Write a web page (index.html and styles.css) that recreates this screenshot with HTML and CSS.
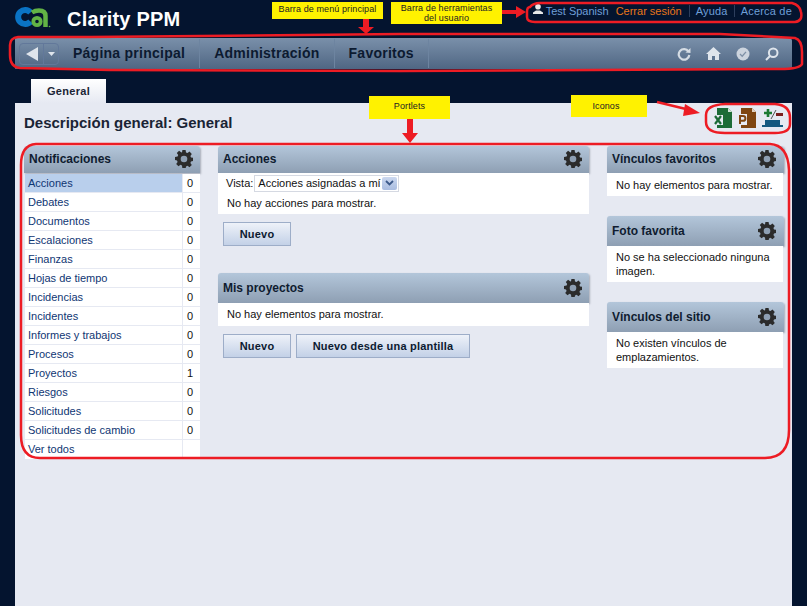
FILE: index.html
```html
<!DOCTYPE html>
<html lang="es">
<head>
    <meta charset="UTF-8">
    <title>Clarity PPM</title>
    <link rel="stylesheet" href="styles.css">
</head>
<body>
    <svg class="defs" width="0" height="0">
        <symbol id="gear" viewBox="0 0 18 18">
            <path d="M7.4 0h3.2l.4 2.4 1.5.6 2-1.4 2.3 2.3-1.4 2 .6 1.5 2.4.4v3.2l-2.4.4-.6 1.5 1.4 2-2.3 2.3-2-1.4-1.5.6-.4 2.4H7.4L7 15.4 5.5 14.8l-2 1.4-2.3-2.3 1.4-2-.6-1.5L0 10V7l2.6-.4.6-1.5-1.4-2 2.3-2.3 2 1.400L7 2.4z" fill="#2b2b2b"/>
            <circle cx="9" cy="9" r="3.3" fill="#8e9fb3"/>
        </symbol>
    </svg>

    <header class="top-bar">
        <div class="brand">
            <svg class="logo" width="36" height="24" viewBox="0 0 36 24">
                <path d="M15.5 6.500A7 7 0 1 0 15.5 15.500" fill="none" stroke="#0a73c4" stroke-width="6"/>
                <path d="M17 6.500Q20 4.500 24 4.500 30.500 4.500 30.500 10V21" fill="none" stroke="#62b345" stroke-width="4.500"/>
                <circle cx="22" cy="15.500" r="3.700" fill="none" stroke="#62b345" stroke-width="3.800"/>
                <circle cx="34.500" cy="20.500" r=".8" fill="#62b345"/>
            </svg>
            <span class="product">Clarity PPM</span>
        </div>
        <div class="user-tools">
            <svg class="user-icon" width="10" height="10" viewBox="0 0 10 10"><circle cx="5" cy="2.800" r="2.800" fill="#e8e8e8"/><path d="M0 10V8.500L3 6.500h4l3 2V10z" fill="#e8e8e8"/></svg>
            <a class="user-name">Test Spanish</a>
            <a class="logout">Cerrar sesión</a>
            <a class="tool-link">Ayuda</a>
            <a class="tool-link">Acerca de</a>
        </div>
    </header>

    <nav class="main-menu">
        <div class="history">
            <span class="history-back"><svg width="12" height="14" viewBox="0 0 12 14"><path d="M12 0v14L0 7z" fill="#dfe5ec"/></svg></span>
            <span class="history-more"><svg width="7" height="4" viewBox="0 0 7 4"><path d="M0 0h7L3.500 4z" fill="#dfe5ec"/></svg></span>
        </div>
        <a class="menu-item">Página principal</a>
        <a class="menu-item">Administración</a>
        <a class="menu-item">Favoritos</a>
        <div class="menu-icons">
            <svg width="14" height="14" viewBox="0 0 14 14"><path d="M11.500 4.500A5.300 5.300 0 1 0 12.300 8" fill="none" stroke="#d5dce4" stroke-width="2.200"/><path d="M8.500 5.500L13.500 6V1z" fill="#d5dce4"/></svg>
            <svg width="15" height="13" viewBox="0 0 15 13"><path d="M7.500 0L15 7h-2v6H9V9H6v4H2V7H0z" fill="#dfe5ec"/></svg>
            <svg width="14" height="14" viewBox="0 0 14 14"><circle cx="7" cy="7" r="6.500" fill="#ccd4de"/><path d="M4 7l2.200 2.200L10 4.800" fill="none" stroke="#7e90a6" stroke-width="1.300"/></svg>
            <svg width="14" height="14" viewBox="0 0 14 14"><circle cx="8.200" cy="5.800" r="4.300" fill="none" stroke="#dfe5ec" stroke-width="2"/><path d="M5 9l-4 4" stroke="#dfe5ec" stroke-width="2"/></svg>
        </div>
    </nav>

    <div class="tabs">
        <a class="tab">General</a>
    </div>

    <main class="content">
        <div class="page-head">
            <h1>Descripción general: General</h1>
            <div class="page-icons">
                <svg width="18" height="20" viewBox="0 0 18 20"><path d="M3 0h11l4 4v16H3z" fill="#1c6b37"/><path d="M14 0l4 4h-4z" fill="#cfe3d6"/><rect x="0" y="7" width="9" height="10" fill="#e6e9f2"/><path d="M1 8l6 8M7 8l-6 8" stroke="#1c6b37" stroke-width="2.200"/></svg>
                <svg width="18" height="20" viewBox="0 0 18 20"><path d="M3 0h11l4 4v16H3z" fill="#7f4510"/><path d="M14 0l4 4h-4z" fill="#e2d0bd"/><rect x="0" y="6" width="9" height="11" fill="#e6e9f2"/><path d="M2 16V8h3a2.300 2.300 0 0 1 0 4.800H2" fill="none" stroke="#7f4510" stroke-width="2"/></svg>
                <svg width="21" height="20" viewBox="0 0 21 20"><path d="M6 1v8M2 5h8" stroke="#1c7a33" stroke-width="2.600"/><path d="M9 11l5-9" stroke="#555" stroke-width="1"/><rect x="14" y="5" width="7" height="3" fill="#7a1f1f"/><rect x="3" y="12" width="15" height="5" fill="#14587f"/><rect x="0" y="17" width="21" height="2" fill="#14587f"/></svg>
            </div>
        </div>

        <div class="portlet-columns">
            <div class="column column-left">
                <section class="portlet">
                    <div class="portlet-head"><h2>Notificaciones</h2><svg class="gear"><use href="#gear"/></svg></div>
                    <table class="notif-table">
                        <tr class="selected"><td><a>Acciones</a></td><td>0</td></tr>
                        <tr><td><a>Debates</a></td><td>0</td></tr>
                        <tr><td><a>Documentos</a></td><td>0</td></tr>
                        <tr><td><a>Escalaciones</a></td><td>0</td></tr>
                        <tr><td><a>Finanzas</a></td><td>0</td></tr>
                        <tr><td><a>Hojas de tiempo</a></td><td>0</td></tr>
                        <tr><td><a>Incidencias</a></td><td>0</td></tr>
                        <tr><td><a>Incidentes</a></td><td>0</td></tr>
                        <tr><td><a>Informes y trabajos</a></td><td>0</td></tr>
                        <tr><td><a>Procesos</a></td><td>0</td></tr>
                        <tr><td><a>Proyectos</a></td><td>1</td></tr>
                        <tr><td><a>Riesgos</a></td><td>0</td></tr>
                        <tr><td><a>Solicitudes</a></td><td>0</td></tr>
                        <tr><td><a>Solicitudes de cambio</a></td><td>0</td></tr>
                        <tr><td><a>Ver todos</a></td><td></td></tr>
                    </table>
                </section>
            </div>

            <div class="column column-middle">
                <section class="portlet">
                    <div class="portlet-head"><h2>Acciones</h2><svg class="gear"><use href="#gear"/></svg></div>
                    <div class="portlet-body actions-body">
                        <div class="view-row">
                            <span>Vista:</span>
                            <span class="fake-select">Acciones asignadas a mí<span class="select-arrow"><svg width="9" height="6" viewBox="0 0 9 6"><path d="M1 1l3.500 3.500L8 1" fill="none" stroke="#3d5a8a" stroke-width="1.800"/></svg></span></span>
                        </div>
                        <p>No hay acciones para mostrar.</p>
                    </div>
                    <div class="portlet-actions"><button>Nuevo</button></div>
                </section>
                <section class="portlet">
                    <div class="portlet-head tall"><h2>Mis proyectos</h2><svg class="gear"><use href="#gear"/></svg></div>
                    <div class="portlet-body"><p>No hay elementos para mostrar.</p></div>
                    <div class="portlet-actions"><button>Nuevo</button><button class="wide">Nuevo desde una plantilla</button></div>
                </section>
            </div>

            <div class="column column-right">
                <section class="portlet">
                    <div class="portlet-head"><h2>Vínculos favoritos</h2><svg class="gear"><use href="#gear"/></svg></div>
                    <div class="portlet-body side first"><p>No hay elementos para mostrar.</p></div>
                </section>
                <section class="portlet">
                    <div class="portlet-head tall"><h2>Foto favorita</h2><svg class="gear"><use href="#gear"/></svg></div>
                    <div class="portlet-body side"><p>No se ha seleccionado ninguna imagen.</p></div>
                </section>
                <section class="portlet">
                    <div class="portlet-head tall"><h2>Vínculos del sitio</h2><svg class="gear"><use href="#gear"/></svg></div>
                    <div class="portlet-body side"><p>No existen vínculos de emplazamientos.</p></div>
                </section>
            </div>
        </div>
    </main>

    <!-- Anotaciones sobre la captura -->
    <div class="note note-menu">Barra de menú principal</div>
    <div class="note note-tools">Barra de herramientas<br>del usuario</div>
    <div class="note note-portlets">Portlets</div>
    <div class="note note-icons">Iconos</div>
    <svg class="marks" width="807" height="606" viewBox="0 0 807 606">
        <g fill="none" stroke="#ed1c24" stroke-width="2.500">
            <path d="M530 7Q527 7 527 12V17Q527 22 535 22H795Q803 21 801 12Q800 5 792 3H540Q533 3 530 7z"/>
            <path d="M18 37H90L400 34H720L795 38Q802 40 802 52V64Q800 69 780 69L400 71 110 70 20 68Q10 67 10 55V45Q10 38 18 37z"/>
            <path d="M725 104H775Q790 105 790 118V124Q790 133 775 133H725Q706 133 706 122V115Q706 105 725 104z"/>
            <path d="M36 144H770Q788 145 789 170V430Q789 458 765 458H40Q21 458 21 435V165Q21 145 36 144z"/>
        </g>
        <g fill="#ed1c24" stroke="none">
            <path d="M363 19h6v8h5l-8 7-8-7h5z"/>
            <path d="M502 10h14V6l10 6-10 6v-4h-14z"/>
            <path d="M407 119h6v14h5l-8 10-8-10h5z"/>
        </g>
        <path d="M657 102L690 110" stroke="#ed1c24" stroke-width="2.500"/>
        <path d="M700 113L685 104 683 116z" fill="#ed1c24"/>
    </svg>
</body>
</html>
```

FILE: styles.css
```css
* {
    box-sizing: border-box;
}

html, body {
    height: 100%;
}

body {
    margin: 0;
    position: relative;
    overflow: hidden;
    display: flex;
    flex-direction: column;
    background-color: #04142f;
    font-family: "Liberation Sans", Arial, sans-serif;
    font-size: 11px;
    color: #111;
}

.defs {
    position: absolute;
}

/* Cabecera */
.top-bar {
    height: 38px;
    flex: none;
    display: flex;
    justify-content: space-between;
    padding: 0 15px;
}

.brand {
    display: flex;
    align-items: flex-start;
}

.logo {
    margin-top: 6px;
    margin-right: 16px;
}

.product {
    margin-top: 7px;
    font-size: 20px;
    line-height: 24px;
    font-weight: bold;
    letter-spacing: .2px;
    color: #fff;
}

.user-tools {
    display: flex;
    align-items: center;
    height: 21px;
    font-size: 11px;
}

.user-icon {
    margin-right: 3px;
    margin-top: -4px;
}

.user-name, .tool-link {
    color: #6f9fd8;
}

.logout {
    color: #e8761a;
    margin-left: 7px;
    padding-right: 1px;
}

.tool-link {
    margin-left: 6px;
    padding-left: 6px;
    border-left: 1px solid #2d3e5c;
    letter-spacing: .2px;
}

/* Menu principal */
.main-menu {
    height: 31px;
    flex: none;
    margin: 0 15px;
    display: flex;
    align-items: stretch;
    background: linear-gradient(#7a90aa, #4f6683);
    border-radius: 0 3px 0 0;
}

.history {
    display: flex;
    align-self: center;
    margin-left: 4px;
    width: 40px;
    height: 22px;
    border: 1px solid #62789a;
    border-radius: 4px;
}

.history-back {
    width: 24px;
    display: flex;
    align-items: center;
    justify-content: center;
    border-right: 1px solid #62789a;
}

.history-more {
    flex: 1;
    display: flex;
    align-items: center;
    justify-content: center;
}

.menu-item {
    display: flex;
    align-items: center;
    padding: 0 14px 2px;
    border-right: 1px solid #6d84a0;
    margin: 1px 0;
    font-size: 14px;
    font-weight: bold;
    letter-spacing: .25px;
    color: #0c1a30;
}

.menu-icons {
    margin-left: auto;
    display: flex;
    align-items: center;
    gap: 15px;
    padding-right: 13px;
}

/* Pestanas */
.tabs {
    flex: none;
    height: 34px;
    padding: 10px 0 0 31px;
}

.tab {
    display: block;
    width: 75px;
    height: 24px;
    background: linear-gradient(#fff, #e6e9f2);
    text-align: center;
    line-height: 24px;
    font-weight: bold;
    letter-spacing: .3px;
    color: #1a2435;
}

/* Contenido */
.content {
    flex: 1;
    margin: 0 15px;
    padding: 0 8px 0 9px;
    background-color: #e6e9f2;
}

.page-head {
    height: 43px;
    display: flex;
    justify-content: space-between;
    align-items: flex-start;
}

h1 {
    margin: 11px 0 0;
    font-size: 15px;
    line-height: 18px;
    color: #1a2435;
}

.page-icons {
    display: flex;
    gap: 6px;
    padding: 5px 1px 0 0;
}

.portlet-columns {
    display: flex;
    gap: 18px;
    align-items: flex-start;
}

.column-left {
    width: 176px;
}

.column-middle {
    width: 371px;
}

.column-right {
    width: 177px;
}

.portlet-head {
    height: 27px;
    display: flex;
    align-items: center;
    justify-content: space-between;
    padding: 0 7px 1px 5px;
    background: linear-gradient(#b3c6da, #8e9fb3);
    border-radius: 3px 3px 0 0;
    box-shadow: 1px 1px 2px #a7adb8;
}

.portlet-head.tall {
    height: 30px;
    padding-bottom: 0;
}

.column-right .portlet-head {
    padding-right: 8px;
}

h2 {
    margin: 0;
    font-size: 12px;
    color: #0f1c30;
}

.gear {
    width: 18px;
    height: 18px;
}

.portlet-body {
    background-color: #fff;
    padding: 4px 9px 5px;
}

.actions-body {
    padding: 1px 9px 4px;
}

.portlet-body.side {
    padding: 4px 9px 4px;
    margin-right: 1px;
}

.portlet-body.side.first {
    padding-top: 5px;
}

p {
    margin: 0;
    line-height: 14px;
}

.view-row {
    display: flex;
    align-items: center;
    height: 18px;
    margin: 0 0 4px -1px;
}

.fake-select {
    display: flex;
    align-items: center;
    justify-content: space-between;
    width: 145px;
    height: 17px;
    margin-left: 1px;
    padding: 0 1px 0 3px;
    border: 1px solid #d5d9e2;
}

.select-arrow {
    width: 15px;
    height: 13px;
    display: flex;
    align-items: center;
    justify-content: center;
    background: linear-gradient(#cbd8ef, #aabde0);
    border-radius: 2px;
}

.portlet-actions {
    display: flex;
    gap: 5px;
    padding: 8px 0 27px 5px;
}

button {
    width: 68px;
    height: 24px;
    padding: 0;
    border: 1px solid #9dadc8;
    background: linear-gradient(#eef2f9, #c3d1e7);
    font-family: "Liberation Sans", Arial, sans-serif;
    font-size: 11px;
    font-weight: bold;
    letter-spacing: .2px;
    color: #0c1a30;
}

button.wide {
    width: 174px;
}

.column-right .portlet {
    margin-bottom: 20px;
}

/* Tabla de notificaciones */
.notif-table {
    width: 175px;
    margin: 1px 0 0 1px;
    border-collapse: separate;
    border-spacing: 0;
}

.notif-table td {
    height: 19px;
    padding: 0 0 0 3px;
    background-color: #fff;
    border-bottom: 1px solid #e6e9f2;
    line-height: 14px;
}

.notif-table tr:last-child td {
    border-bottom: 0;
    padding-bottom: 1px;
}

.notif-table td:last-child {
    width: 18px;
    padding-left: 4px;
    border-left: 1px solid #e6e9f2;
}

.notif-table a {
    color: #0f3673;
}

.notif-table .selected td:first-child {
    background-color: #b9cfec;
}

/* Anotaciones */
.note {
    position: absolute;
    background-color: #fff200;
    font-size: 9px;
    line-height: 10px;
    letter-spacing: .1px;
    text-align: center;
    color: #222;
}

.note-menu {
    left: 272px;
    top: 2px;
    width: 111px;
    height: 17px;
    padding-top: 2px;
}

.note-tools {
    left: 391px;
    top: 2px;
    width: 111px;
    height: 22px;
    padding-top: 1px;
}

.note-portlets {
    left: 369px;
    top: 96px;
    width: 81px;
    height: 23px;
    padding-top: 5px;
}

.note-icons {
    left: 571px;
    top: 95px;
    width: 76px;
    height: 22px;
    padding: 6px 6px 0 0;
}

.marks {
    position: absolute;
    left: 0;
    top: 0;
    pointer-events: none;
}
```
